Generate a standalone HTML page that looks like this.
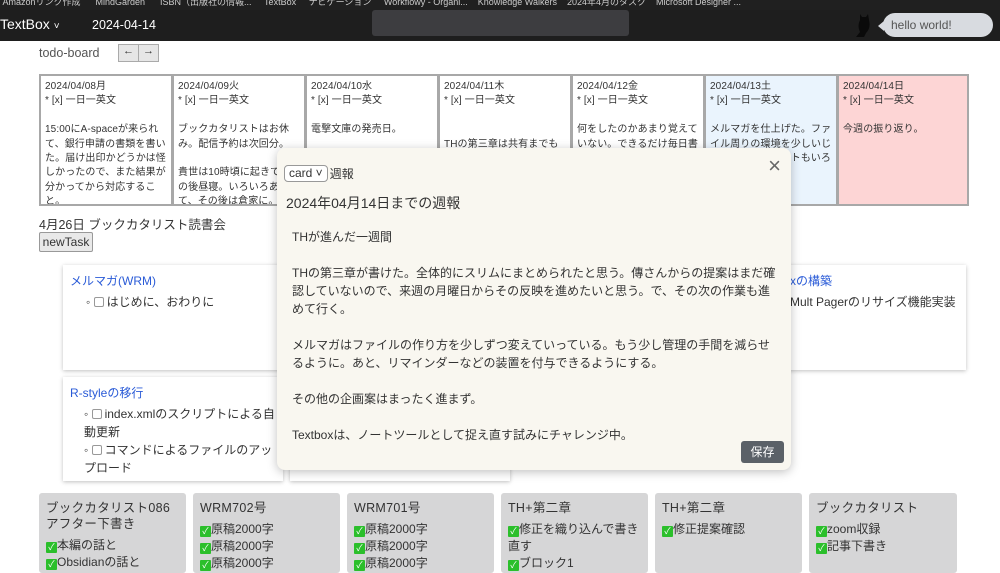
<!DOCTYPE html>
<html><head><meta charset="utf-8"><style>
*{box-sizing:border-box;margin:0;padding:0}
body{width:1000px;height:566px;overflow:hidden;background:#fff;font-family:"Liberation Sans","Noto Sans CJK JP",sans-serif;color:#333;position:relative}
.abs{position:absolute}
.bm{left:0;top:0;width:1000px;height:10px;background:#202020;color:#ccc;font-size:9px;line-height:4px;white-space:nowrap;overflow:hidden}
.nav{left:0;top:10px;width:1000px;height:31px;background:#1e1e1e}
.cell{position:absolute;top:74px;height:132px;border:2px solid #a8a8a8;padding:4px 4px;font-size:10px;line-height:14.4px;color:#333;overflow:hidden;background:#fff;letter-spacing:0.1px}
.card{position:absolute;background:#fff;box-shadow:0 1px 4px rgba(0,0,0,.25);padding:7px 7px;font-size:12px;line-height:18px}
.card a{color:#2a5bd7;font-size:12px}
.card ul{list-style:none;margin-left:16px;margin-top:3px}
.cb{display:inline-block;width:10px;height:10px;border:1px solid #999;border-radius:2px;vertical-align:-1px;margin-right:3px}
.g{position:absolute;top:493px;height:80px;width:147px;background:#d6d6d7;border-radius:3px;padding:7px 7px;font-size:12px;line-height:17px;color:#333}
.g h4{font-weight:normal;font-size:12.5px;line-height:16px;margin-bottom:5px;letter-spacing:0.3px}
.ck{display:inline-block;width:11px;height:11px;background:#2bbf2b;color:#fff;font-size:9px;line-height:11px;text-align:center;vertical-align:-1px;border-radius:1px}
.modal{left:277px;top:148px;width:514px;height:322px;background:#f9f7f0;border-radius:8px;box-shadow:0 2px 10px rgba(0,0,0,.25);padding:17px 10px}
.modal p{font-size:12px;line-height:18px;color:#333}
</style></head><body>
<div class="abs bm">&nbsp;Amazonリンク作成 &nbsp;&nbsp;&nbsp;&nbsp; MindGarden &nbsp;&nbsp;&nbsp;&nbsp; ISBN（出版社の情報... &nbsp;&nbsp;&nbsp; TextBox &nbsp;&nbsp;&nbsp; ナビゲーション &nbsp;&nbsp;&nbsp; Workflowy - Organi... &nbsp;&nbsp; Knowledge Walkers &nbsp;&nbsp; 2024年4月のタスク &nbsp;&nbsp; Microsoft Designer ...</div>
<div class="abs nav"></div>
<div class="abs" style="left:0;top:16px;color:#fff;font-size:14px">TextBox <span style="font-size:10px">˅</span></div>
<div class="abs" style="left:92px;top:18px;color:#fff;font-size:12.5px">2024-04-14</div>
<div class="abs" style="left:372px;top:10px;width:257px;height:26px;background:#3d3d40;border-radius:3px"></div>
<svg class="abs" style="left:852px;top:12px" width="22" height="26" viewBox="0 0 22 26"><path d="M8 2 L10 5 L14 5 L16 2 L17 8 Q19 16 14 21 L12 25 L4 25 L8 20 Q5 14 8 8 Z" fill="#0a0a0a"/></svg>
<div class="abs" style="left:878px;top:21px;width:0;height:0;border-top:5px solid transparent;border-bottom:5px solid transparent;border-right:6px solid #d8dbe0"></div>
<div class="abs" style="left:883px;top:13px;width:110px;height:24px;background:#d8dbe0;border-radius:12px;font-size:12px;color:#555;padding:5px 0 0 8px">hello world!</div>

<div class="abs" style="left:39px;top:46px;font-size:12.5px;color:#555">todo-board</div>
<div class="abs" style="left:118px;top:44px;width:41px;height:18px;border:1px solid #aaa;background:#e6e6e6;font-size:11px;display:flex"><span style="flex:1;text-align:center;border-right:1px solid #aaa">←</span><span style="flex:1;text-align:center">→</span></div>

<div class="cell" style="left:39px;width:134px">2024/04/08月<br>* [x] 一日一英文<br><br>15:00にA-spaceが来られて、銀行申請の書類を書いた。届け出印かどうかは怪しかったので、また結果が分かってから対応すること。</div>
<div class="cell" style="left:172px;width:134px">2024/04/09火<br>* [x] 一日一英文<br><br>ブックカタリストはお休み。配信予約は次回分。<br><br>貴世は10時頃に起きて、その後昼寝。いろいろあって、その後は倉家に。</div>
<div class="cell" style="left:305px;width:134px">2024/04/10水<br>* [x] 一日一英文<br><br>電撃文庫の発売日。</div>
<div class="cell" style="left:438px;width:134px">2024/04/11木<br>* [x] 一日一英文<br><br><br>THの第三章は共有までもっ</div>
<div class="cell" style="left:571px;width:134px">2024/04/12金<br>* [x] 一日一英文<br><br>何をしたのかあまり覚えていない。できるだけ毎日書</div>
<div class="cell" style="left:704px;width:134px;background:#eaf4fd">2024/04/13土<br>* [x] 一日一英文<br><br>メルマガを仕上げた。ファイル周りの環境を少しいじった。アップデートもいろいろ</div>
<div class="cell" style="left:837px;width:132px;background:#fdd5d5">2024/04/14日<br>* [x] 一日一英文<br><br>今週の振り返り。</div>

<div class="abs" style="left:39px;top:214px;font-size:12.5px">4月26日 ブックカタリスト読書会</div>
<div class="abs" style="left:39px;top:232px;width:54px;height:20px;border:1px solid #999;background:#e9e9e9;font-size:12px;text-align:center;line-height:18px;border-radius:2px">newTask</div>

<div class="card" style="left:63px;top:265px;width:220px;height:105px"><a>メルマガ(WRM)</a><ul><li>◦ <span class="cb"></span>はじめに、おわりに</li></ul></div>
<div class="card" style="left:515px;top:265px;width:451px;height:105px;padding-left:275px"><a>xの構築</a><div style="margin-top:3px">Mult Pagerのリサイズ機能実装</div></div>
<div class="card" style="left:63px;top:377px;width:220px;height:104px;padding-right:2px"><a>R-styleの移行</a><ul style="margin-left:14px"><li>◦ <span class="cb"></span>index.xmlのスクリプトによる自動更新</li><li>◦ <span class="cb"></span>コマンドによるファイルのアップロード</li></ul></div>
<div class="card" style="left:290px;top:377px;width:220px;height:104px"></div>

<div class="g" style="left:39px"><h4>ブックカタリスト086アフター下書き</h4><span class="ck">✓</span>本編の話と<br><span class="ck">✓</span>Obsidianの話と</div>
<div class="g" style="left:193px"><h4>WRM702号</h4><span class="ck">✓</span>原稿2000字<br><span class="ck">✓</span>原稿2000字<br><span class="ck">✓</span>原稿2000字</div>
<div class="g" style="left:347px"><h4>WRM701号</h4><span class="ck">✓</span>原稿2000字<br><span class="ck">✓</span>原稿2000字<br><span class="ck">✓</span>原稿2000字</div>
<div class="g" style="left:501px"><h4>TH+第二章</h4><span class="ck">✓</span>修正を織り込んで書き直す<br><span class="ck">✓</span>ブロック1</div>
<div class="g" style="left:655px"><h4>TH+第二章</h4><span class="ck">✓</span>修正提案確認</div>
<div class="g" style="left:809px;width:148px"><h4>ブックカタリスト</h4><span class="ck">✓</span>zoom収録<br><span class="ck">✓</span>記事下書き</div>

<div class="abs modal">
<div style="font-size:12px;display:flex;align-items:center"><span style="display:inline-block;border:1px solid #999;border-radius:4px;padding:0 4px;height:17px;line-height:15px;background:#fff;margin-left:-3px;margin-right:2px">card ˅</span>週報</div>
<div style="font-size:14px;margin-top:11px;margin-left:-1px">2024年04月14日までの週報</div>
<div style="margin-top:15px;padding-left:5px">
<p>THが進んだ一週間</p><br>
<p>THの第三章が書けた。全体的にスリムにまとめられたと思う。傳さんからの提案はまだ確認していないので、来週の月曜日からその反映を進めたいと思う。で、その次の作業も進めて行く。</p><br>
<p>メルマガはファイルの作り方を少しずつ変えていっている。もう少し管理の手間を減らせるように。あと、リマインダーなどの装置を付与できるようにする。</p><br>
<p>その他の企画案はまったく進まず。</p><br>
<p>Textboxは、ノートツールとして捉え直す試みにチャレンジ中。</p>
</div>
<div class="abs" style="right:10px;top:8px;font-size:22px;color:#666;line-height:20px">×</div>
<div class="abs" style="right:7px;top:293px;width:43px;height:22px;background:#5b6168;color:#fff;font-size:12px;text-align:center;line-height:22px;border-radius:3px">保存</div>
</div>
</body></html>
